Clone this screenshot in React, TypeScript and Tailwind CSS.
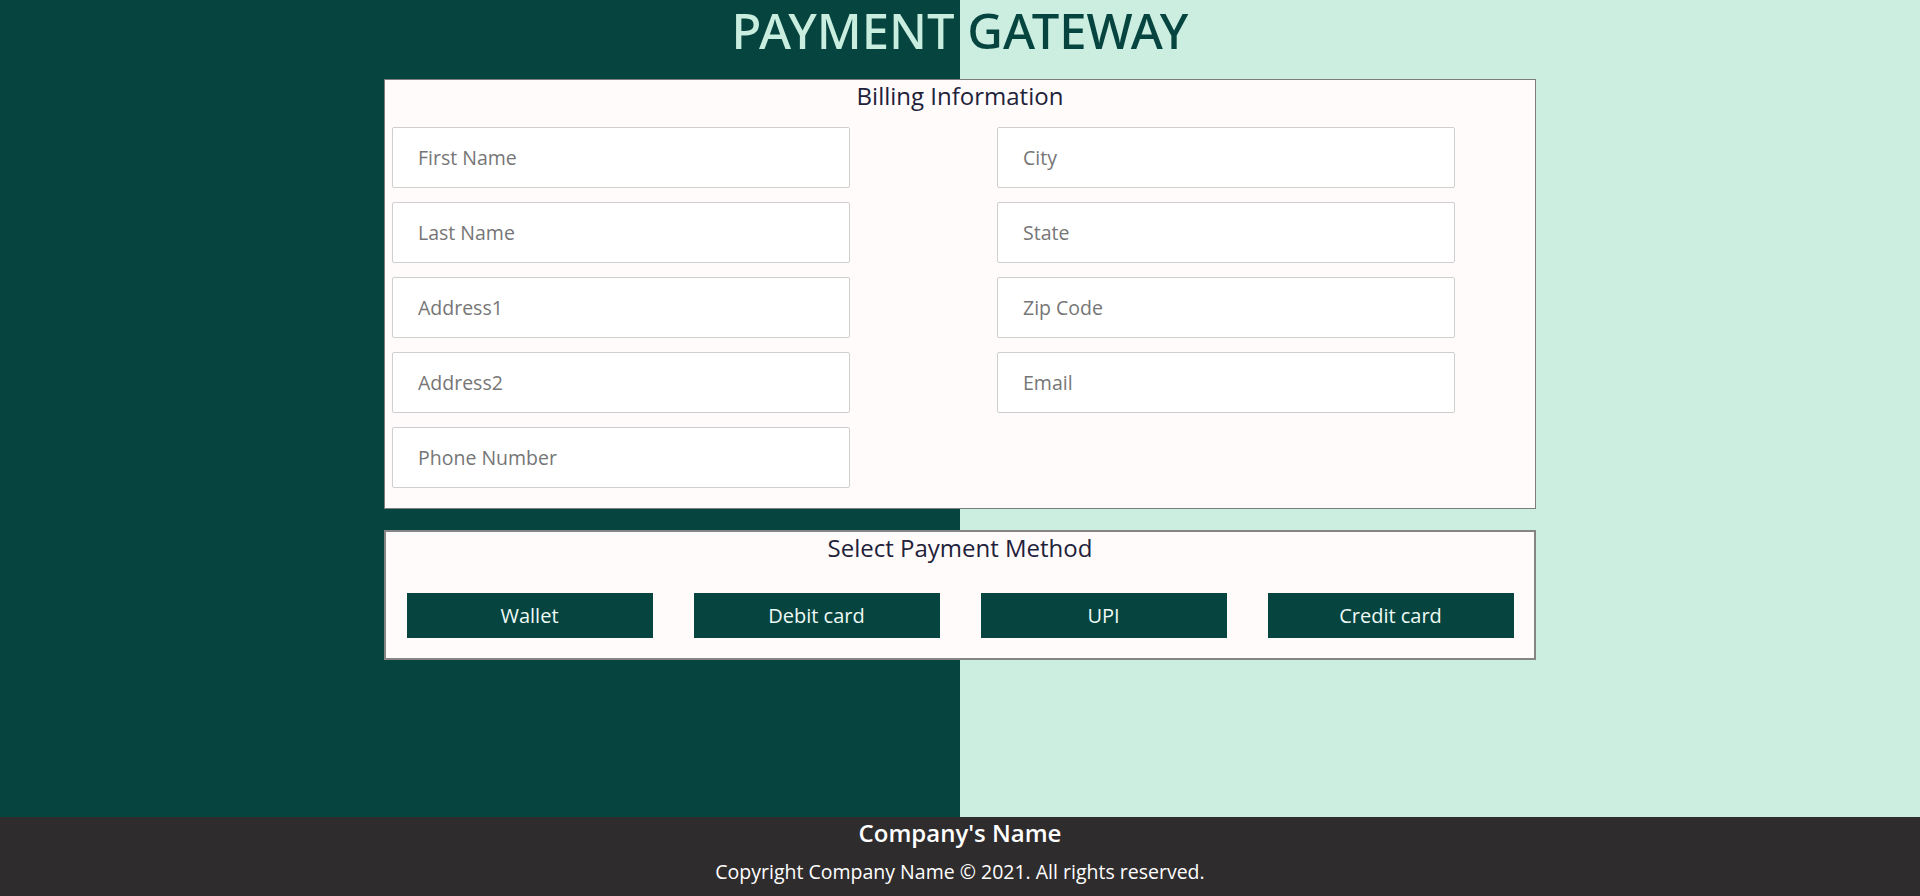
import React from "react";

const leftFields = ["First Name", "Last Name", "Address1", "Address2", "Phone Number"];
const rightFields = ["City", "State", "Zip Code", "Email"];
const methods = ["Wallet", "Debit card", "UPI", "Credit card"];

function Field({ placeholder }: { placeholder: string }) {
  return (
    <input
      type="text"
      placeholder={placeholder}
      className="h-[61px] w-[458px] rounded-[2px] border border-[#cfcfcf] bg-white pl-[25px] text-[19.5px] text-[#333] outline-none placeholder:text-[#767676]"
    />
  );
}

export default function App() {
  return (
    <div className="flex min-h-screen flex-col font-['Open_Sans',sans-serif]">
      <main className="flex-1 bg-[linear-gradient(to_right,#05443f_50%,#cbeee0_50%)]">
        <h1 className="mb-[18px] w-full bg-[linear-gradient(to_right,#c9eedf_50%,#05443f_50%)] bg-clip-text text-center font-['Noto_Sans',sans-serif] text-[49px] font-medium leading-[61px] text-transparent">
          PAYMENT GATEWAY
        </h1>

        <section className="mx-auto w-[1152px] border border-[#7d7d7d] bg-[#fffbfa] pb-[20px]">
          <h2 className="text-center text-[24px] leading-8 text-[#22213a]">Billing Information</h2>
          <div className="mt-[15px] flex gap-[147px] pl-[7px]">
            <div className="flex flex-col gap-[14px]">
              {leftFields.map((f) => (
                <Field key={f} placeholder={f} />
              ))}
            </div>
            <div className="flex flex-col gap-[14px]">
              {rightFields.map((f) => (
                <Field key={f} placeholder={f} />
              ))}
            </div>
          </div>
        </section>

        <section className="mx-auto mt-[21px] w-[1152px] border-2 border-[#858585] bg-[#fffbfa] pb-[20px]">
          <h2 className="text-center text-[24px] leading-8 text-[#22213a]">Select Payment Method</h2>
          <div className="mt-[29px] flex justify-around">
            {methods.map((m) => (
              <button
                key={m}
                className="h-[45px] w-[246px] bg-[#05443f] text-[20px] text-[#eefaf5]"
              >
                {m}
              </button>
            ))}
          </div>
        </section>
      </main>

      <footer className="flex h-[79px] flex-col items-center bg-[#2f2c2d] text-white">
        <p className="text-[24px] font-semibold leading-8">Company's Name</p>
        <p className="mt-[8px] text-[19.5px] leading-[30px]">Copyright Company Name © 2021. All rights reserved.</p>
      </footer>
    </div>
  );
}
